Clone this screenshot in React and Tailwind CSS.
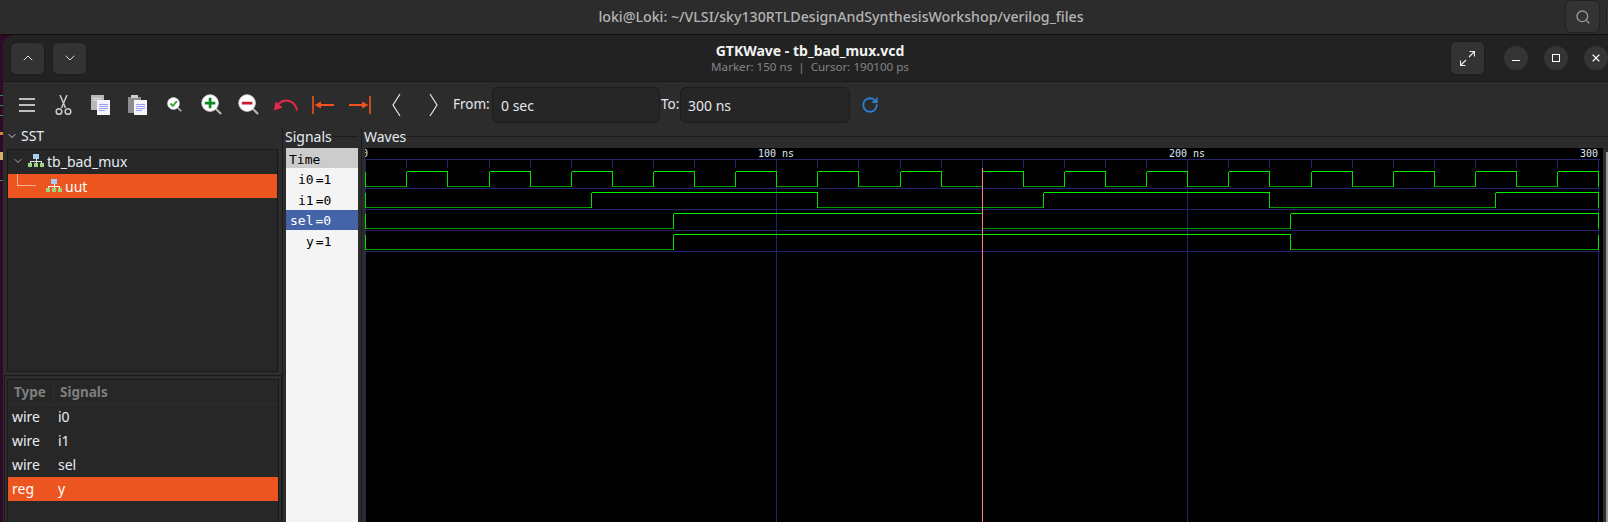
import { ChevronUp, ChevronDown, Search, X, RotateCw } from "lucide-react";

const X0 = 365.7;
const PX_PER_NS = 4.11;
const xAt = (ns) => X0 + ns * PX_PER_NS;

const rows = [
  { hi: 171.5, lo: 186.5, sep: 188.5, edges: Array.from({ length: 30 }, (_, i) => (i + 1) * 10) },
  { hi: 192.5, lo: 207.5, sep: 209.5, edges: [55, 110, 165, 220, 275] },
  { hi: 213.5, lo: 228.5, sep: 230.5, edges: [75, 150, 225] },
  { hi: 234.5, lo: 249.5, sep: 251.5, edges: [75, 225] },
];

const ticks = Array.from({ length: 31 }, (_, i) => i * 10);
const snap = (t) => Math.floor(xAt(t)) + 0.5;

function Wave({ row }) {
  const points = [0, ...row.edges, 300];
  const out = [];
  let level = 0;
  for (let i = 0; i < points.length - 1; i++) {
    const a = snap(points[i]);
    const b = snap(points[i + 1]);
    const y = level ? row.hi : row.lo;
    out.push(<line key={`h${i}`} x1={a} x2={b} y1={y} y2={y} stroke={level ? "#00f000" : "#009c00"} />);
    out.push(<line key={`v${i}`} x1={b} x2={b} y1={row.hi} y2={row.lo} stroke="#00e000" />);
    level = level ? 0 : 1;
  }
  out.push(<line key="first" x1={snap(0)} x2={snap(0)} y1={row.hi} y2={row.lo} stroke="#00e000" />);
  return <g>{out}</g>;
}

function WaveCanvas() {
  return (
    <svg width="1238" height="374" viewBox="365 148 1238 374" className="block">
      <rect x="365" y="148" width="1238" height="374" fill="#000" />
      <g shapeRendering="crispEdges">
        <line x1="365" x2="1600" y1="159.5" y2="159.5" stroke="#23236e" />
        {ticks.map((t) => (
          <line key={t} x1={snap(t)} x2={snap(t)} y1="160" y2="168" stroke="#23236e" />
        ))}
        {[0, 100, 200, 300].map((t) => (
          <line key={t} x1={snap(t)} x2={snap(t)} y1="160" y2="522" stroke="#23236e" />
        ))}
        {rows.map((r) => (
          <line key={r.sep} x1="365" x2="1600" y1={r.sep} y2={r.sep} stroke="#23236e" />
        ))}
        {rows.map((r) => (
          <Wave key={r.sep} row={r} />
        ))}
        <line x1="982.5" x2="982.5" y1="168" y2="522" stroke="#ff8080" />
      </g>
      <g fill="#dfe9f5" fontFamily="DejaVu Sans Mono" fontSize="10">
        <text x="362" y="157">0</text>
        <text x="758" y="157">100 ns</text>
        <text x="1169" y="157">200 ns</text>
        <text x="1580" y="157">300</text>
      </g>
    </svg>
  );
}

function Hierarchy({ light }) {
  const c = light ? "#ffffff" : "#dfe6ee";
  return (
    <svg width="16" height="14" viewBox="0 0 16 14" shapeRendering="crispEdges" className="shrink-0">
      <rect x="5" y="0" width="6" height="5" fill="#a8cdf0" />
      <path d="M8 5V7M2.5 9V7.5H13.5V9M8 7V9" stroke={c} fill="none" />
      <rect x="0" y="9" width="4" height="4" fill="#9ad67e" />
      <rect x="6" y="9" width="4" height="4" fill="#9ad67e" />
      <rect x="12" y="9" width="4" height="4" fill="#9ad67e" />
    </svg>
  );
}

function Magnifier({ size, sign }) {
  return (
    <svg width={size} height={size} viewBox="0 0 22 22">
      <path d="M14.5 14.5L21 21" stroke="#b9b9b9" strokeWidth="2.2" />
      <circle cx="9.5" cy="9.5" r="8.7" fill="#fff" stroke="#d8d8d8" />
      {sign === "plus" && <path d="M4 9.5H15M9.5 4V15" stroke="#0a8a1f" strokeWidth="2.8" />}
      {sign === "minus" && <path d="M4 9.5H15" stroke="#cc1733" strokeWidth="3" />}
      {sign === "check" && <path d="M5 9.5L8.5 13L14.5 6" stroke="#3aa63a" strokeWidth="2.8" fill="none" />}
    </svg>
  );
}

function DocLines() {
  return (
    <g>
      <rect x="6" y="5" width="12.5" height="15" fill="#f4f4fa" />
      <path d="M8 9.5H16.5M8 11.5H16.5M8 13.5H16.5M8 15.5H14" stroke="#9c9cf0" />
    </g>
  );
}

function ToolSlot({ children }) {
  return <div className="flex h-6 w-[37px] shrink-0 items-center justify-center">{children}</div>;
}

function Toolbar() {
  return (
    <div className="flex h-[45px] shrink-0 items-center bg-[#2c2c2c] pl-[5px] text-[14px] text-[#e4e8ec]">
      <ToolSlot>
        <svg width="16" height="14" viewBox="0 0 16 14" stroke="#eeeeee" strokeWidth="1.4">
          <path d="M0 1H16M0 7H16M0 13H16" />
        </svg>
      </ToolSlot>
      <ToolSlot>
        <svg width="17" height="20" viewBox="0 0 17 20" fill="none" stroke="#c9c9c9" strokeWidth="1.5">
          <path d="M5 0L10.5 13M12 0L6.5 13" />
          <circle cx="4" cy="16.5" r="2.8" />
          <circle cx="13" cy="16.5" r="2.8" />
        </svg>
      </ToolSlot>
      <ToolSlot>
        <svg width="19" height="20" viewBox="0 0 19 20" shapeRendering="crispEdges">
          <rect x="0" y="0" width="13" height="15" fill="#b9b9b9" />
          <path d="M2 3H11M2 5H11" stroke="#dddddd" />
          <DocLines />
        </svg>
      </ToolSlot>
      <ToolSlot>
        <svg width="19" height="20" viewBox="0 0 19 20" shapeRendering="crispEdges">
          <rect x="0" y="2" width="13" height="16" fill="#8d8d8d" />
          <rect x="3" y="0" width="7" height="3" fill="#cfcfcf" />
          <DocLines />
        </svg>
      </ToolSlot>
      <ToolSlot>
        <Magnifier size={15} sign="check" />
      </ToolSlot>
      <ToolSlot>
        <Magnifier size={21} sign="plus" />
      </ToolSlot>
      <ToolSlot>
        <Magnifier size={21} sign="minus" />
      </ToolSlot>
      <ToolSlot>
        <svg width="24" height="13" viewBox="0 0 24 13" fill="none">
          <path d="M23 12.5C22 4.5 12 -1.5 4.5 6" stroke="#e8294d" strokeWidth="2" />
          <path d="M0 12.5L1.5 3.5L8.5 9.5Z" fill="#e8294d" />
        </svg>
      </ToolSlot>
      <ToolSlot>
        <svg width="22" height="18" viewBox="0 0 22 18" fill="none" stroke="#f4511e">
          <path d="M1 0V18" strokeWidth="1.6" />
          <path d="M8 9H22" strokeWidth="1.8" />
          <path d="M2.5 9L9 5.5V12.5Z" fill="#f4511e" stroke="none" />
        </svg>
      </ToolSlot>
      <ToolSlot>
        <svg width="22" height="18" viewBox="0 0 22 18" fill="none" stroke="#f4511e">
          <path d="M21 0V18" strokeWidth="1.6" />
          <path d="M0 9H14" strokeWidth="1.8" />
          <path d="M19.5 9L13 5.5V12.5Z" fill="#f4511e" stroke="none" />
        </svg>
      </ToolSlot>
      <ToolSlot>
        <svg width="9" height="24" viewBox="0 0 9 24" fill="none" stroke="#e8e8e8" strokeWidth="1.2">
          <path d="M8 1L1 12L8 23" />
        </svg>
      </ToolSlot>
      <ToolSlot>
        <svg width="9" height="24" viewBox="0 0 9 24" fill="none" stroke="#e8e8e8" strokeWidth="1.2">
          <path d="M1 1L8 12L1 23" />
        </svg>
      </ToolSlot>
      <span className="ml-[1px] w-[39px] shrink-0 text-[13.5px]">From:</span>
      <div className="mt-[1px] flex h-[36px] w-[168px] shrink-0 items-center rounded-md border border-[#1c1c1c] bg-[#262626] pl-[8px]">0 sec</div>
      <span className="w-[20px] shrink-0 pl-[1px] text-[13.5px]">To:</span>
      <div className="mt-[1px] flex h-[36px] w-[170px] shrink-0 items-center rounded-md border border-[#1c1c1c] bg-[#262626] pl-[7px]">300 ns</div>
      <RotateCw size={18} strokeWidth={2.4} color="#2a7fd0" className="ml-[11px]" />
    </div>
  );
}

function Header() {
  return (
    <div className="flex h-[47px] shrink-0 items-center border-b border-[#191919] bg-[#222222] pl-[7px]">
      <div className="flex w-[309px] gap-[7px]">
        <button className="flex h-[33px] w-[35px] items-center justify-center rounded-md border border-[#1d1d1d] bg-[#333333]">
          <ChevronUp size={16} strokeWidth={1.5} color="#dddddd" />
        </button>
        <button className="flex h-[33px] w-[35px] items-center justify-center rounded-md border border-[#1d1d1d] bg-[#333333]">
          <ChevronDown size={16} strokeWidth={1.5} color="#dddddd" />
        </button>
      </div>
      <div className="flex-1 text-center leading-none">
        <div className="text-[14px] font-bold text-[#f2f2f2]">GTKWave - tb_bad_mux.vcd</div>
        <div className="mt-[3px] text-[11.6px] text-[#858585]">Marker: 150 ns &nbsp;|&nbsp; Cursor: 190100 ps</div>
      </div>
      <div className="flex w-[307px] items-center justify-end gap-[16px]">
        <button className="mr-[3px] flex h-[34px] w-[35px] items-center justify-center rounded-md border border-[#1d1d1d] bg-[#333333]">
          <svg width="15" height="15" viewBox="0 0 15 15" fill="none" stroke="#eeeeee" strokeWidth="1.1">
            <path d="M0.5 14.5L6 9M9 6L14.5 0.5M9.5 0.5H14.5V5.5M0.5 9.5V14.5H5.5" />
          </svg>
        </button>
        <span className="flex h-6 w-6 items-center justify-center rounded-full bg-[#353535]">
          <span className="mt-[4px] h-px w-2 bg-white" />
        </span>
        <span className="flex h-6 w-6 items-center justify-center rounded-full bg-[#353535]">
          <span className="h-2 w-2 border border-white" />
        </span>
        <span className="flex h-6 w-6 items-center justify-center rounded-full bg-[#353535]">
          <X size={12} color="#fff" strokeWidth={2.2} />
        </span>
      </div>
    </div>
  );
}

function SstPanel() {
  return (
    <div className="flex w-[280px] shrink-0 flex-col border-r border-[#1c1c1c] text-[14px] text-[#e4ecf4]">
      <div className="flex h-[22px] items-center gap-[3px] pb-[5px] pl-[3px]">
        <ChevronDown size={12} color="#cccccc" />
        <span>SST</span>
      </div>
      <div className="mr-[4px] ml-[4px] flex h-[223px] shrink-0 flex-col border border-[#1a1a1a] bg-[#272727]">
        <div className="flex h-[24px] items-center pb-[2px] pl-[4px]">
          <ChevronDown size={12} color="#aaaaaa" />
          <span className="ml-[4px]">
            <Hierarchy />
          </span>
          <span className="ml-[3px]">tb_bad_mux</span>
        </div>
        <div className="relative flex h-[24px] items-center gap-[3px] bg-[#ec5520] pl-[38px] text-white">
          <span className="absolute top-0 left-[9px] h-[12px] w-[19px] border-b border-l border-[#f8b090]" />
          <Hierarchy light />
          <span>uut</span>
        </div>
      </div>
      <div className="mt-[3px] ml-[1px] flex flex-1 flex-col border-x border-t border-[#1a1a1a] pt-[3px]">
        <div className="mr-[2px] ml-[2px] flex-1 border-x border-t border-[#1a1a1a] bg-[#272727]">
          <div className="flex h-[25px] items-center border-b border-[#2f2f2f] text-[13.5px] font-bold text-[#7e7e7e]">
            <span className="w-[46px] border-r border-[#2f2f2f] pl-[6px]">Type</span>
            <span className="pl-[6px]">Signals</span>
          </div>
          {[
            ["wire", "i0"],
            ["wire", "i1"],
            ["wire", "sel"],
            ["reg", "y"],
          ].map(([type, name]) => (
            <div key={name} className={`flex h-[24px] items-center pb-[2px] ${name === "y" ? "bg-[#ec5520] text-white" : ""}`}>
              <span className="w-[50px] pl-[4px]">{type}</span>
              <span>{name}</span>
            </div>
          ))}
        </div>
      </div>
    </div>
  );
}

function FrameLabel({ children }) {
  return (
    <div className="flex h-[21px] shrink-0 items-center pb-[2px] text-[14px] text-[#e4ecf4]">
      <span className="shrink-0">{children}</span>
      <span className="ml-[1px] h-px flex-1 bg-[#1c1c1c]" />
    </div>
  );
}

function SignalsPanel() {
  const names = [
    { n: "i0", v: "1", cls: "h-[21px] pl-[12px]" },
    { n: "i1", v: "0", cls: "h-[21px] pl-[12px]" },
    { n: "sel", v: "0", cls: "h-[20px] pl-[4px] bg-[#4463a8] text-white" },
    { n: "y", v: "1", cls: "h-[21px] pl-[20px]" },
  ];
  return (
    <div className="flex w-[79px] shrink-0 flex-col border-r border-[#1c1c1c] pl-[2px]">
      <div className="w-[73px]">
        <FrameLabel>Signals</FrameLabel>
      </div>
      <div className="ml-[1px] flex w-[72px] flex-1 flex-col bg-[#f4f4f4] font-['DejaVu_Sans_Mono',monospace] text-[13px] text-black">
        <div className="flex h-[20px] items-center bg-[#cccccc] pt-[3px] pl-[3px]">Time</div>
        {names.map((s) => (
          <div key={s.n} className={`flex items-center pt-[2px] whitespace-pre ${s.cls}`}>
            {s.n}
            <span className="ml-[2px]">={s.v}</span>
          </div>
        ))}
      </div>
    </div>
  );
}

function WavesPanel() {
  return (
    <div className="flex min-w-0 flex-1 flex-col pl-[2px]">
      <FrameLabel>Waves</FrameLabel>
      <div className="flex flex-1 pl-[1px]">
        <WaveCanvas />
        <div className="mt-[4px] ml-[3px] w-[2px] bg-[#9a9a9a]" />
      </div>
    </div>
  );
}

const specks = [
  "top-[60px] h-px bg-[#2e8b57]",
  "top-[70px] h-px bg-[#2e8b57]",
  "top-[80px] h-px bg-[#2e8b57]",
  "top-[97px] h-[3px] bg-[#d98040]",
  "top-[117px] h-[8px] bg-[#d8b070]",
  "top-[145px] h-px bg-[#2e8b57]",
];

export default function App() {
  return (
    <div className="flex h-[522px] w-[1608px] flex-col overflow-hidden bg-[#2c2c2c] font-['Noto_Sans',sans-serif]">
      <div className="relative flex h-[34px] shrink-0 items-center justify-center pl-[74px] text-[14.2px] font-medium text-[#b4b4b4]">
        loki@Loki: ~/VLSI/sky130RTLDesignAndSynthesisWorkshop/verilog_files
        <button className="absolute top-0 right-[8px] flex h-[33px] w-[35px] items-center justify-center rounded-md border border-[#222222] bg-[#333333]">
          <Search size={16} color="#999999" />
        </button>
        <span className="absolute top-0 right-[-33px] h-[33px] w-[35px] rounded-md border border-[#222222] bg-[#333333]" />
      </div>
      <div className="h-px shrink-0 bg-[#111111]" />
      <div className="relative flex flex-1 bg-[#300a24]">
        {specks.map((s) => (
          <span key={s} className={`absolute left-0 w-[3px] ${s}`} />
        ))}
        <div className="ml-[3px] flex min-w-0 flex-1 flex-col overflow-hidden rounded-tl-xl bg-[#2c2c2c]">
          <Header />
          <Toolbar />
          <div className="flex h-[395px]">
            <SstPanel />
            <SignalsPanel />
            <WavesPanel />
          </div>
        </div>
      </div>
    </div>
  );
}
